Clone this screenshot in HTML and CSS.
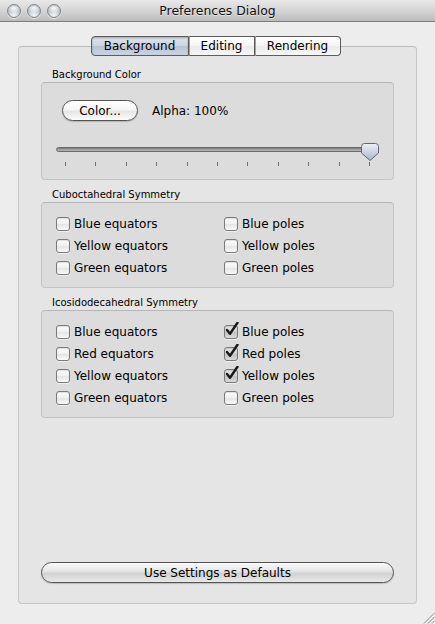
FILE: index.html
```html
<!DOCTYPE html>
<html>
<head>
<meta charset="utf-8">
<title>Preferences Dialog</title>
<link rel="stylesheet" href="styles.css">
</head>
<body>
<div class="window">
  <div class="titlebar">
    <div class="lights">
      <span class="light"></span><span class="light"></span><span class="light"></span>
    </div>
    <div class="title">Preferences Dialog</div>
  </div>
  <div class="content">
    <div class="tabs">
      <div class="tab selected">Background</div>
      <div class="tab">Editing</div>
      <div class="tab">Rendering</div>
    </div>
    <div class="panel">
      <div class="group-label">Background Color</div>
      <div class="box box-color">
        <div class="color-row">
          <button class="pill small">Color...</button>
          <span class="alpha">Alpha: 100%</span>
        </div>
        <div class="slider">
          <div class="track"></div>
          <svg class="thumb" width="18" height="19" viewBox="0 0 18 19">
            <defs>
              <linearGradient id="tg" x1="0" y1="0" x2="0" y2="1">
                <stop offset="0" stop-color="#eef2f7"/>
                <stop offset="0.5" stop-color="#cad3df"/>
                <stop offset="1" stop-color="#a9b5c5"/>
              </linearGradient>
            </defs>
            <path d="M3.5 0.5 H14.5 Q17.5 0.5 17.5 3.5 V10 L9 17.5 L0.5 10 V3.5 Q0.5 0.5 3.5 0.5 Z" fill="url(#tg)" stroke="#5f6672" stroke-width="1"/>
          </svg>
          <div class="ticks">
            <i></i><i></i><i></i><i></i><i></i><i></i><i></i><i></i><i></i><i></i><i></i>
          </div>
        </div>
      </div>

      <div class="group-label">Cuboctahedral Symmetry</div>
      <div class="box box-checks">
        <label class="check"><span class="cb"></span>Blue equators</label>
        <label class="check"><span class="cb"></span>Blue poles</label>
        <label class="check"><span class="cb"></span>Yellow equators</label>
        <label class="check"><span class="cb"></span>Yellow poles</label>
        <label class="check"><span class="cb"></span>Green equators</label>
        <label class="check"><span class="cb"></span>Green poles</label>
      </div>

      <div class="group-label">Icosidodecahedral Symmetry</div>
      <div class="box box-checks">
        <label class="check"><span class="cb"></span>Blue equators</label>
        <label class="check"><span class="cb on"><svg width="15" height="15" viewBox="0 0 15 15"><path d="M3 8 L6 11.8 L13.5 0.8" fill="none" stroke="#1a1a1a" stroke-width="2.4" stroke-linecap="round" stroke-linejoin="round"/></svg></span>Blue poles</label>
        <label class="check"><span class="cb"></span>Red equators</label>
        <label class="check"><span class="cb on"><svg width="15" height="15" viewBox="0 0 15 15"><path d="M3 8 L6 11.8 L13.5 0.8" fill="none" stroke="#1a1a1a" stroke-width="2.4" stroke-linecap="round" stroke-linejoin="round"/></svg></span>Red poles</label>
        <label class="check"><span class="cb"></span>Yellow equators</label>
        <label class="check"><span class="cb on"><svg width="15" height="15" viewBox="0 0 15 15"><path d="M3 8 L6 11.8 L13.5 0.8" fill="none" stroke="#1a1a1a" stroke-width="2.4" stroke-linecap="round" stroke-linejoin="round"/></svg></span>Yellow poles</label>
        <label class="check"><span class="cb"></span>Green equators</label>
        <label class="check"><span class="cb"></span>Green poles</label>
      </div>

      <div class="spacer"></div>
      <button class="pill wide">Use Settings as Defaults</button>
    </div>
  </div>
  <svg class="grip" width="14" height="14" viewBox="0 0 14 14">
    <path d="M13.5 3 L3 13.5 M13.5 7 L7 13.5 M13.5 11 L11 13.5" stroke="#8a8a8a" stroke-width="1"/>
    <path d="M14 4 L4 14 M14 8 L8 14 M14 12 L12 14" stroke="#ffffff" stroke-width="1"/>
  </svg>
</div>
</body>
</html>
```
FILE: styles.css
```css
html, body {
  margin: 0;
  padding: 0;
}
body {
  font-family: "DejaVu Sans", "Liberation Sans", sans-serif;
  color: #000;
  background: #ececec;
}
.window {
  width: 435px;
  height: 624px;
  background: #ededed;
  display: flex;
  flex-direction: column;
  position: relative;
  overflow: hidden;
}
.titlebar {
  height: 22px;
  box-sizing: border-box;
  border-bottom: 1px solid #7e7e7e;
  background: linear-gradient(#e8e8e8, #d3d3d3 55%, #bbbbbb);
  display: flex;
  align-items: center;
}
.lights {
  display: flex;
  gap: 6px;
  margin-left: 7px;
  width: 55px;
}
.light {
  width: 14px;
  height: 14px;
  box-sizing: border-box;
  border-radius: 50%;
  border: 1px solid #7f868f;
  background:
    radial-gradient(ellipse 60% 40% at 50% 25%, rgba(255,255,255,0.95) 0, rgba(255,255,255,0.4) 60%, rgba(255,255,255,0) 100%),
    radial-gradient(circle at 50% 85%, #f4f6f8 0, #c6cbd1 45%, #8c939c 100%);
  box-shadow: 0 1px 0 rgba(255,255,255,0.6);
}
.title {
  flex: 1;
  text-align: center;
  margin-right: 62px;
  font-size: 12.4px;
  color: #111;
  text-shadow: 0 1px 0 rgba(255,255,255,0.5);
}
.content {
  padding: 14px 18px 0;
  flex: 1;
  display: flex;
  flex-direction: column;
}
.tabs {
  display: flex;
  justify-content: center;
  margin-left: -4px;
  height: 20px;
  margin-bottom: -10px;
  position: relative;
  z-index: 1;
}
.tab {
  height: 20px;
  box-sizing: border-box;
  border: 1px solid #5c5c5c;
  border-left: 1px solid #a0a0a0;
  background: linear-gradient(#ffffff, #f5f5f5 50%, #eaeaea 52%, #f8f8f8);
  font-size: 12px;
  line-height: 18px;
  text-align: center;
  padding: 0;
  color: #000;
}
.tab:first-child {
  border-left: 1px solid #5c5c5c;
  border-radius: 4px 0 0 4px;
}
.tab:last-child {
  border-radius: 0 4px 4px 0;
}
.tab.selected {
  width: 98px;
  background: linear-gradient(#dfe5ed, #ccd4df 50%, #b9c4d3 52%, #cbd4e0);
  box-shadow: inset 0 1px 2px rgba(0,0,0,0.3);
}
.tab:nth-child(2) { width: 66px; }
.tab:nth-child(3) { width: 86px; }
.panel {
  height: 558px;
  box-sizing: border-box;
  border: 1px solid #c6c6c6;
  border-top-color: #bcbcbc;
  border-radius: 4px;
  background: #e5e5e5;
  padding: 21px 22px 0;
  display: flex;
  flex-direction: column;
}
.group-label {
  font-size: 10px;
  line-height: 14px;
  height: 14px;
  padding-left: 11px;
  color: #000;
}
.box {
  box-sizing: border-box;
  border: 1px solid #c3c3c3;
  border-top-color: #b6b6b6;
  border-radius: 4px;
  background: #dcdcdc;
  margin-bottom: 8px;
}
.box-color {
  height: 98px;
  padding: 17px 0 0 20px;
}
.color-row {
  display: flex;
  align-items: center;
  gap: 14px;
  height: 21px;
}
.pill {
  font-family: "DejaVu Sans", "Liberation Sans", sans-serif;
  font-size: 12px;
  color: #000;
  box-sizing: border-box;
  height: 21px;
  border: 1px solid #555;
  border-radius: 11px;
  padding: 0;
  margin: 0;
  box-shadow: 0 1px 1px rgba(0,0,0,0.18);
}
.pill.small {
  width: 76px;
  background: linear-gradient(#ffffff, #f6f6f6 45%, #e6e6e6 55%, #fdfdfd);
}
.alpha {
  font-size: 12px;
}
.slider {
  position: relative;
  width: 322px;
  margin-left: -6px;
  margin-top: 22px;
  height: 24px;
}
.track {
  position: absolute;
  left: 0;
  right: 0;
  top: 4px;
  height: 5px;
  box-sizing: border-box;
  border-radius: 3px;
  border: 1px solid #6a6a6a;
  background: linear-gradient(#7a7a7a, #a5a5a5 60%, #b9b9b9);
}
.thumb {
  position: absolute;
  right: -1px;
  top: 0;
}
.ticks {
  position: absolute;
  left: 9px;
  right: 8px;
  top: 19px;
  display: flex;
  justify-content: space-between;
}
.ticks i {
  display: block;
  width: 1px;
  height: 4px;
  background: #6e6e6e;
}
.box-checks {
  display: grid;
  grid-template-columns: 168px 1fr;
  grid-auto-rows: 22px;
  padding: 10px 0 8px 14px;
}
.check {
  display: flex;
  align-items: center;
  font-size: 12px;
  color: #000;
}
.cb {
  width: 14px;
  height: 14px;
  box-sizing: border-box;
  border: 1px solid #7a7a7a;
  border-radius: 3px;
  background: linear-gradient(#fdfdfd, #f0f0f0 50%, #e4e4e4 52%, #fafafa);
  box-shadow: inset 0 1px 1px rgba(0,0,0,0.12), 0 1px 0 rgba(255,255,255,0.5);
  margin-right: 4px;
  position: relative;
  flex: none;
}
.cb.on {
  background: linear-gradient(#e6e6e6, #d2d2d2 50%, #c3c3c3 52%, #d9d9d9);
}
.cb svg {
  position: absolute;
  left: -1px;
  top: -4px;
}
.spacer {
  flex: 1;
}
.pill.wide {
  width: 353px;
  margin-bottom: 20px;
  font-size: 12px;
  background: linear-gradient(#fbfbfb, #e4e4e4 45%, #d2d2d2 55%, #e8e8e8);
}
.grip {
  position: absolute;
  right: 0;
  bottom: 0;
}
```
